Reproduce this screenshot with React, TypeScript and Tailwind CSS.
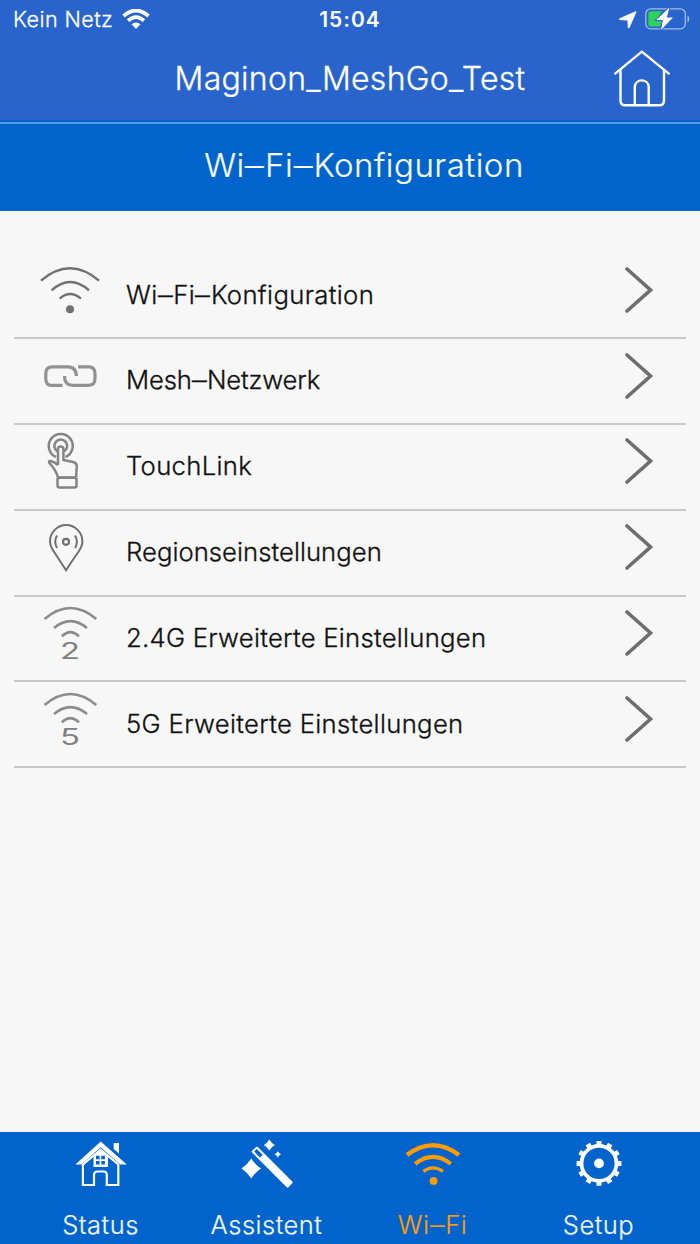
import { ReactNode } from "react"

const MeshIcon = () => (
  <g strokeWidth="3.2" stroke="#929292">
    <path d="M48.5 46.3H37.5Q31.8 46.3 31.8 40V34.5Q31.8 27.8 38.5 27.8H54Q62.3 27.8 62.3 37" />
    <path d="M64 27.8H75.5Q81 28.3 81 34.5V39.5Q81 46.3 74.5 46.3H58.5Q50.5 46.3 50.5 37" />
  </g>
)

const TouchIcon = () => (
  <g strokeWidth="2.5" stroke="#858585">
    <path d="M42 33A12 12 0 1 1 51.5 33" />
    <path d="M43.5 27.5A6.4 6.4 0 1 1 50 27.5" />
    <path d="M44 41V25Q44 22.5 46.7 22.5T49.4 25V36L59 38Q63 39 62.8 42.5L62 53.5H44Q42.5 47 35.5 39Q34 36.7 36.5 37Q40 37.5 44 41" />
    <rect x="43.5" y="53.8" width="19" height="9.6" rx="2" />
  </g>
)

const RegionIcon = () => (
  <g strokeWidth="2" stroke="#707070">
    <path d="M52 60.3Q46 51 39.5 41Q36 35.5 36 31.5A16.2 16.5 0 0 1 68.4 31.5Q68.4 35.5 65 41Q58 51 52 60.3Z" />
    <circle cx="52" cy="31.8" r="3" strokeWidth="2.2" />
    <path d="M43 25.5Q39.5 31.7 43 38M61 25.5Q64.8 31.7 61 38" />
  </g>
)

const BandIcon = ({ band }: { band: string }) => (
  <g strokeWidth="2.5" stroke="#8c8c8c">
    <path d="M30.5 23Q56.4 1 82.3 23M40 32Q56.4 18.3 73 32M47.8 40.3Q56.4 32 65 40.3" />
    <text
      x="46"
      y="62.6"
      textLength="20"
      lengthAdjust="spacingAndGlyphs"
      fontSize="22.5"
      fill="#808080"
      stroke="none"
    >
      {band}
    </text>
  </g>
)

const WifiIcon = () => (
  <g strokeWidth="2.4" stroke="#707070">
    <path d="M27 27.7Q56 3 85 27.7M37.7 37.3Q56 20.8 75 37.3M45.7 45.6Q56 36.5 67 45.6" />
    <circle cx="56" cy="56.3" r="4" fill="#707070" stroke="none" />
  </g>
)

// Draws the en dashes of a label a little wider than the font does
const Label = ({ text }: { text: string }) =>
  text.split("–").map((part, i) => (
    <span key={i}>
      {i > 0 && <span className="mx-[0.05em] inline-block scale-x-115">–</span>}
      {part}
    </span>
  ))

const items: { label: string; icon: ReactNode; tracking: string }[] = [
  { label: "Wi–Fi–Konfiguration", icon: <WifiIcon />, tracking: "tracking-[0.35px]" },
  { label: "Mesh–Netzwerk", icon: <MeshIcon />, tracking: "tracking-[-0.17px]" },
  { label: "TouchLink", icon: <TouchIcon />, tracking: "tracking-[0.3px]" },
  { label: "Regionseinstellungen", icon: <RegionIcon />, tracking: "tracking-[0.03px]" },
  { label: "2.4G Erweiterte Einstellungen", icon: <BandIcon band="2" />, tracking: "tracking-[0.26px]" },
  { label: "5G Erweiterte Einstellungen", icon: <BandIcon band="5" />, tracking: "tracking-[0.32px]" },
]

const HouseIcon = () => (
  <>
    <path d="M30.7 9.4L56.8 32.4H50.3L30.7 15.3L11.2 32.4H5.4ZM43.7 11H49V21.5L43.7 17Z" fill="#fff" />
    <path
      d="M12.9 32.5V53H24V43Q24 39.5 27.5 39.5H33.8Q36.8 39.5 36.8 43V53H48.3V32.5L30.7 17.6Z"
      fill="none"
      stroke="#fff"
      strokeWidth="2.2"
    />
    <path d="M23.5 24L30.7 18L38 24V35H23.5Z" fill="#fff" />
    <path d="M26 23.7H29.6V27.2H26ZM31.3 23.7H34.9V27.2H31.3ZM26 28.9H29.6V32.4H26ZM31.3 28.9H34.9V32.4H31.3Z" fill="#0064cc" />
  </>
)

const WandIcon = () => (
  <g fill="#fff">
    <path d="M16 18.7L20 15.2Q21 14.5 22 15.3L57 50.3L52.3 55.5Q51.5 56 50.7 55.2L15.8 20.2Q15.2 19.4 16 18.7Z" />
    <path d="M18.2 19.5L20.8 17.1L26.7 23L23.8 25.5Z" fill="#0064cc" />
    <path d="M15.3 26.5Q19 32.5 25 36.5Q19 40.5 15.3 46.5Q11.5 40.5 5.5 36.5Q11.5 32.5 15.3 26.5Z" />
    <path d="M33.3 7.5Q35.3 11 38.8 13Q35.3 15 33.3 18.5Q31.3 15 27.8 13Q31.3 11 33.3 7.5Z" />
    <path d="M41.8 19.2Q42.9 21.2 45 22.3Q42.9 23.4 41.8 25.5Q40.7 23.4 38.6 22.3Q40.7 21.2 41.8 19.2Z" />
  </g>
)

const NavWifiIcon = () => (
  <g fill="none" stroke="#ff9c00">
    <path d="M5 23Q31 3.5 57 23" strokeWidth="4.5" />
    <path d="M13.2 31.9Q31 18 48.8 31.9" strokeWidth="4.1" />
    <path d="M21.3 39.4Q31 32.3 41 39.4" strokeWidth="3.2" />
    <circle cx="31.6" cy="48.9" r="3.9" fill="#ff9c00" stroke="none" />
  </g>
)

const GearIcon = () => (
  <g fill="none" stroke="#fff">
    <circle cx="31" cy="31.4" r="17.5" strokeWidth="3.8" />
    {[0, 30, 60, 90, 120, 150].map((angle) => (
      <path
        key={angle}
        d="M31 9V14M31 48.8V53.8"
        strokeWidth="5"
        transform={`rotate(${angle} 31 31.4)`}
      />
    ))}
    <circle cx="31" cy="31.4" r="4.9" fill="#fff" stroke="none" />
  </g>
)

const tabs = [
  { label: "Status", icon: <HouseIcon />, color: "text-[#f2f7fd]" },
  { label: "Assistent", icon: <WandIcon />, color: "text-[#f2f7fd]" },
  { label: "Wi–Fi", icon: <NavWifiIcon />, color: "text-[#ff9c00]" },
  { label: "Setup", icon: <GearIcon />, color: "text-[#f2f7fd]" },
]

const StatusBar = () => (
  <div className="grid h-10 grid-cols-3 items-center pl-[13px] pr-[10px] text-white">
    <div className="flex items-center gap-[9px]">
      <span className="-mt-[2px] text-[21.5px] font-[350] tracking-[0.45px] [-webkit-text-stroke:0.3px]">Kein Netz</span>
      <svg className="-mt-[2px] h-5 w-7" viewBox="0 0 28 20" fill="none" stroke="#fff">
        <path d="M1.5 7Q14 -4 26.5 7" strokeWidth="3.8" />
        <path d="M6 11.7Q14 4.6 22 11.7" strokeWidth="3.6" />
        <path d="M9.5 15.3Q14 11.5 18.5 15.3L14 20Z" fill="#fff" stroke="none" />
      </svg>
    </div>
    <span className="pr-[3px] text-center text-[21px] font-semibold tracking-[1px]">15:04</span>
    <div className="flex items-center justify-end gap-[8px]">
      <svg className="h-[18px] w-[18px]" viewBox="0 0 18 18" fill="#fff">
        <path d="M17 1.2Q17.5 .2 16.3 .7L.8 7.5Q-.2 8.5 1 8.7L8.8 9.2L9.1 16.4Q9.5 17.8 10.4 16.5Z" stroke="#fff" strokeWidth=".6" />
      </svg>
      <svg className="-mt-1 h-6 w-[45px]" viewBox="0 0 45 24">
        <rect x=".8" y="2.8" width="39.5" height="20" rx="5" fill="none" stroke="#a3baea" strokeWidth="1.3" />
        <path d="M42.5 9.5Q44.3 10 44.3 13T42.5 16.5Z" fill="#a3baea" />
        <path d="M6 5.3H17L11 15H17L15.5 20.5H6Q3.3 20.5 3.3 18V8Q3.3 5.3 6 5.3Z" fill="#30d158" />
        <path d="M24.5 1.5L11.2 14H17.8L16 24L28 11.5H21.8Z" fill="#fff" stroke="#2864cb" strokeWidth="1.8" paintOrder="stroke" />
      </svg>
    </div>
  </div>
)

const App = () => {
  return (
    <div className="flex h-[1244px] w-[700px] flex-col overflow-hidden bg-[#f7f7f7] font-['Inter',sans-serif]">
      <header className="h-[122px] border-b-2 border-[#0064cc] bg-[#2864cb]">
        <StatusBar />
        <div className="grid h-20 grid-cols-[88px_1fr_88px] items-start">
          <h1 className="col-start-2 pt-[15px] text-center text-[32px] font-[350] leading-[48px] tracking-[0.27px] text-white [-webkit-text-stroke:0.3px]">
            Maginon_MeshGo_Test
          </h1>
          <svg className="mt-2 h-[60px] w-[60px]" viewBox="0 0 60 60" fill="none" stroke="#fff" strokeWidth="2.4" strokeLinecap="round" strokeLinejoin="round">
            <path d="M3.2 25.6L29.8 3.6L56.8 25.6" />
            <path d="M8.5 22V52.5Q8.5 57.3 13 57.3H47.5Q52 57.3 52 52.5V22" />
            <path d="M22.8 57V38.5A7 7 0 0 1 36.7 38.5V57" />
          </svg>
        </div>
      </header>
      <div className="h-[89px] border-t-2 border-[#5a9bdc] bg-[#0064cc]">
        <h2 className="pl-7 text-center text-[33px] font-light leading-[83px] tracking-[0.5px] text-[#f6faff] [-webkit-text-stroke:0.2px]">
          <Label text="Wi–Fi–Konfiguration" />
        </h2>
      </div>

      <main className="flex-1 px-[14px] pt-[42.4px]">
        {items.map((item) => (
          <div key={item.label} className="flex h-[85.8px] items-center border-b-2 border-[#cacaca]">
            <svg className="h-[85px] w-28 shrink-0" viewBox="0 0 112 85" fill="none">
              {item.icon}
            </svg>
            <span
              className={`-mt-px flex-1 whitespace-nowrap text-[25.7px] font-[350] text-[#111] [-webkit-text-stroke:0.3px] ${item.tracking}`}
            >
              <Label text={item.label} />
            </span>
            <svg className="mr-[33px] mb-[11px] h-[46px] w-[28px]" viewBox="0 0 28 46" fill="none" stroke="#6e6e6e" strokeWidth="3.6" strokeLinecap="round">
              <path d="M2 2L25.5 23L2 44" />
            </svg>
          </div>
        ))}
      </main>

      <nav className="grid h-28 grid-cols-[repeat(4,166px)] bg-[#0064cc] pl-[17.5px]">
        {tabs.map((tab) => (
          <div key={tab.label} className="flex flex-col items-center">
            <svg className="h-[60px] w-[62px]" viewBox="0 0 62 60">
              {tab.icon}
            </svg>
            <span
              className={`mt-[17px] text-[25.5px] font-light leading-8 tracking-[0.5px] [-webkit-text-stroke:0.2px] ${tab.color}`}
            >
              <Label text={tab.label} />
            </span>
          </div>
        ))}
      </nav>
    </div>
  )
}

export default App
